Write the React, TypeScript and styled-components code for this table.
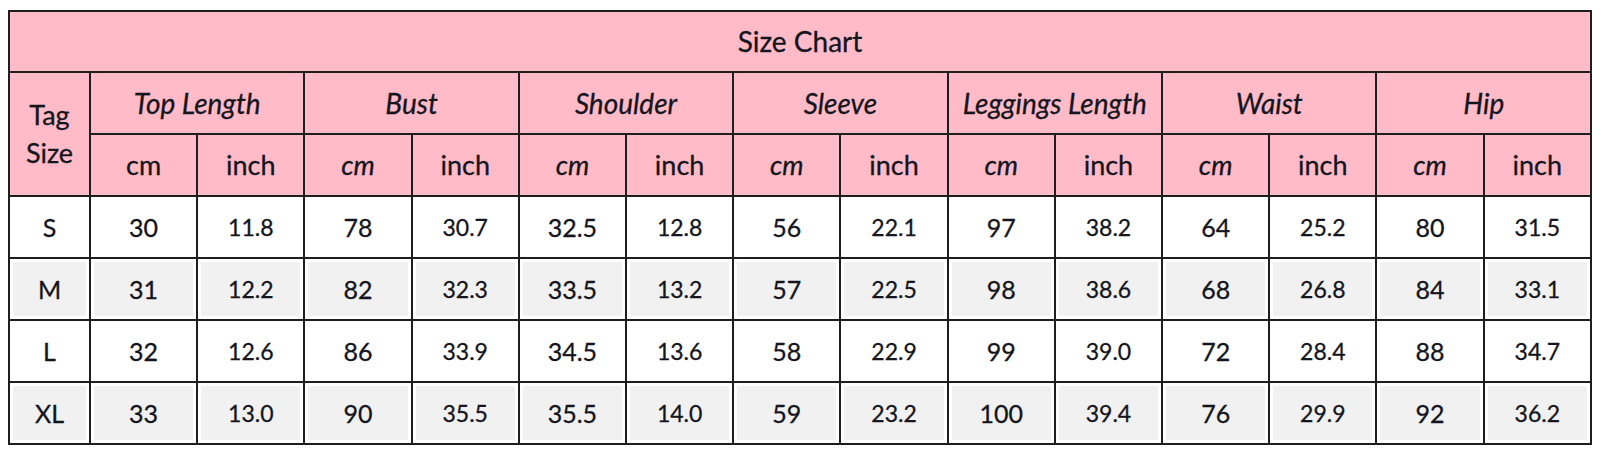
import React from 'react'
import styled, { createGlobalStyle } from 'styled-components'

interface SizeRow {
  tag: string;
  values: string[];
}

const groups = ['Top Length', 'Bust', 'Shoulder', 'Sleeve', 'Leggings Length', 'Waist', 'Hip']

const rows: SizeRow[] = [
  { tag: 'S', values: ['30', '11.8', '78', '30.7', '32.5', '12.8', '56', '22.1', '97', '38.2', '64', '25.2', '80', '31.5'] },
  { tag: 'M', values: ['31', '12.2', '82', '32.3', '33.5', '13.2', '57', '22.5', '98', '38.6', '68', '26.8', '84', '33.1'] },
  { tag: 'L', values: ['32', '12.6', '86', '33.9', '34.5', '13.6', '58', '22.9', '99', '39.0', '72', '28.4', '88', '34.7'] },
  { tag: 'XL', values: ['33', '13.0', '90', '35.5', '35.5', '14.0', '59', '23.2', '100', '39.4', '76', '29.9', '92', '36.2'] },
]

const GlobalStyle = createGlobalStyle`
  body {
    margin: 0;
    background: #ffffff;
    font-family: Lato, "Liberation Sans", sans-serif;
  }
`

const Page = styled.div`
  padding: 10px 8px 12px 8px;
`

const Table = styled.table`
  width: 1584px;
  height: 432px;
  border-collapse: collapse;
  table-layout: fixed;
  color: #15151d;
  border: 2px solid #1e1e1e;
`

const HeadCell = styled.th<{ $italic?: boolean; $size?: number; $tall?: boolean }>`
  background: #ffbbc8;
  border: 2px solid #1e1e1e;
  font-weight: 400;
  font-style: ${p => (p.$italic ? 'italic' : 'normal')};
  font-size: ${p => p.$size ?? 27}px;
  line-height: ${p => (p.$tall ? 1.4 : 1.15)};
  text-align: center;
  vertical-align: middle;
  padding: 0;
  white-space: nowrap;
  -webkit-text-stroke: 0.3px #15151d;
`

const Row = styled.tr`
  height: 62px;
`

const DataCell = styled.td<{ $shaded: boolean; $small?: boolean }>`
  background: ${p => (p.$shaded ? '#f1f1f1' : '#ffffff')};
  box-shadow: inset 0 0 0 3px #ffffff;
  border: 2px solid #1e1e1e;
  font-size: ${p => (p.$small ? 23 : 25)}px;
  text-align: center;
  vertical-align: middle;
  padding: 0;
  -webkit-text-stroke: 0.3px #15151d;
`

const App: React.FC = () => {
  return (
    <>
      <GlobalStyle />
      <Page>
        <Table>
          <colgroup>
            <col style={{ width: 81 }} />
            {Array.from({ length: 14 }).map((_, i) => <col key={i} />)}
          </colgroup>
          <thead>
            <Row style={{ height: 61 }}>
              <HeadCell colSpan={15} $size={28}>Size Chart</HeadCell>
            </Row>
            <Row>
              <HeadCell rowSpan={2} $size={27} $tall>Tag<br />Size</HeadCell>
              {groups.map(g => (
                <HeadCell key={g} colSpan={2} $italic $size={28}>{g}</HeadCell>
              ))}
            </Row>
            <Row>
              {groups.map((g, i) => (
                <React.Fragment key={g}>
                  <HeadCell $italic={i > 0}>cm</HeadCell>
                  <HeadCell>inch</HeadCell>
                </React.Fragment>
              ))}
            </Row>
          </thead>
          <tbody>
            {rows.map((r, ri) => (
              <Row key={r.tag}>
                <DataCell $shaded={ri % 2 === 1}>{r.tag}</DataCell>
                {r.values.map((v, vi) => (
                  <DataCell key={vi} $shaded={ri % 2 === 1} $small={vi % 2 === 1}>{v}</DataCell>
                ))}
              </Row>
            ))}
          </tbody>
        </Table>
      </Page>
    </>
  )
}

export default App
